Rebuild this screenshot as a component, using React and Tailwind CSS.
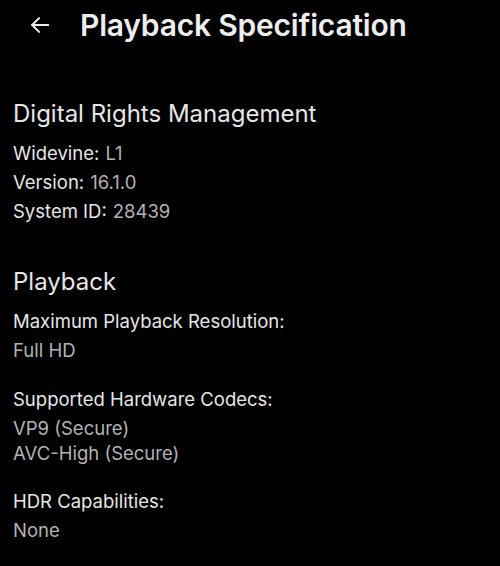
import React from 'react';

const Row = ({ label, value }) => (
  <div className="h-[29px] flex items-center text-[18.5px]">
    <span className="text-[#e6e6e6]">{label}</span>
    <span className="ml-[6px] text-[#b3b3b3]">{value}</span>
  </div>
);

const App = () => {
  return (
    <div className="w-[500px] h-[566px] bg-black overflow-hidden" style={{ fontFamily: 'Inter, "Noto Sans", sans-serif' }}>
      {/* header */}
      <div className="h-[50px] flex items-center pl-[29px]">
        <svg width="22" height="22" viewBox="0 0 24 24" fill="none" stroke="#ededed" strokeWidth="2.2" strokeLinecap="round" strokeLinejoin="round">
          <path d="M21 12H3.5" />
          <path d="M11 4.5L3.5 12L11 19.5" />
        </svg>
        <h1 className="ml-[29px] text-[30px] font-semibold text-[#ededed] tracking-[-0.2px]">Playback Specification</h1>
      </div>

      <div className="px-[13px] pt-[47px]">
        <h2 className="h-[34px] flex items-center text-[24px] text-[#e6e6e6]">Digital Rights Management</h2>
        <div className="mt-[8px]">
          <Row label="Widevine:" value="L1" />
          <Row label="Version:" value="16.1.0" />
          <Row label="System ID:" value="28439" />
        </div>

        <h2 className="mt-[39px] h-[34px] flex items-center text-[24px] text-[#e6e6e6]">Playback</h2>
        <div className="mt-[8px]">
          <div className="h-[29px] flex items-center text-[18.5px] text-[#e6e6e6]">Maximum Playback Resolution:</div>
          <div className="h-[29px] flex items-center text-[18.5px] text-[#b3b3b3]">Full HD</div>
        </div>

        <div className="mt-[20px]">
          <div className="h-[29px] flex items-center text-[18.5px] text-[#e6e6e6]">Supported Hardware Codecs:</div>
          <div className="h-[25px] flex items-center text-[18.5px] text-[#b3b3b3] mt-[2px]">VP9 (Secure)</div>
          <div className="h-[25px] flex items-center text-[18.5px] text-[#b3b3b3]">AVC-High (Secure)</div>
        </div>

        <div className="mt-[21px]">
          <div className="h-[29px] flex items-center text-[18.5px] text-[#e6e6e6]">HDR Capabilities:</div>
          <div className="h-[29px] flex items-center text-[18.5px] text-[#b3b3b3]">None</div>
        </div>
      </div>
    </div>
  );
};

export default App;
